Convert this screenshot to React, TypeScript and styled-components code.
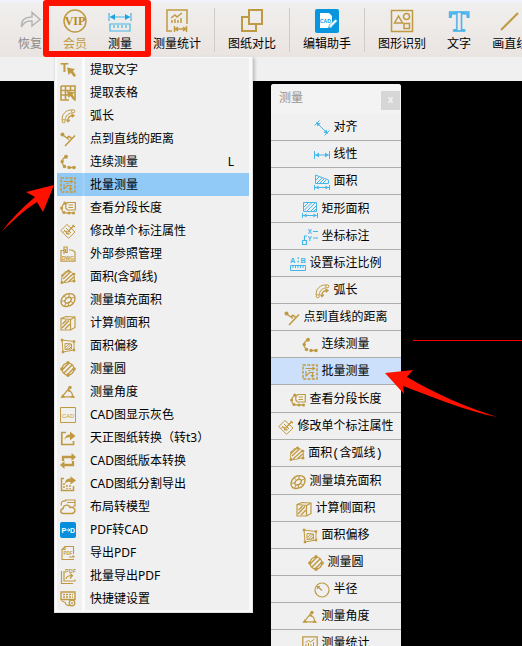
import React from "react";
import styled, { createGlobalStyle, css } from "styled-components";

const GOLD = "#c09a42";
const BLUE = "#45b6ea";
const RED = "#ff1100";

const GlobalStyle = createGlobalStyle`
  *, *::before, *::after { box-sizing: border-box; }
  html, body { margin: 0; background: #000; overflow: hidden; }
  body, button { font-family: "Liberation Mono", "Noto Sans CJK SC", monospace; font-size: 12px; }
`;

const Workspace = styled.main`
  position: relative;
  min-height: 100vh;
  display: flex;
  flex-direction: column;
  overflow: hidden;
`;

const Toolbar = styled.header`
  display: flex;
  align-items: flex-start;
  gap: 21px;
  height: 57px;
  padding: 6px 0 0 18px;
  border-top: 3px solid #f0f1f9;
  background: linear-gradient(#f0efed, #eae4e1);
`;

const ToolButton = styled.button<{ $tone?: string }>`
  flex: none;
  display: flex;
  flex-direction: column;
  align-items: center;
  gap: 3px;
  padding: 0;
  border: 0;
  background: none;
  color: ${(p) => p.$tone || "#000"};
  line-height: 18px;
  white-space: nowrap;

  svg { width: 24px; height: 24px; }
`;

const ToolSeparator = styled.span`
  flex: none;
  width: 1px;
  height: 44px;
  margin: -1px -8px 0;
  background: #cfcbc9;
`;

const TabStrip = styled.div`
  height: 24px;
  background: #f0f0f0;
`;

const Canvas = styled.section`
  flex: 1;
  background: #000;
`;

const Drawing = styled.svg`
  position: absolute;
  left: 0;
  top: 0;
  width: 100%;
  height: 100%;
  pointer-events: none;
`;

const Menu = styled.ul`
  position: absolute;
  left: 54px;
  top: 56px;
  width: 199px;
  margin: 0;
  padding: 1px 3px 2px 2px;
  list-style: none;
  border: 1px solid #e2e2e2;
  background: linear-gradient(#f0f0f0, #f0f0f0) content-box, #fafafa;
  box-shadow: 2px 2px 3px rgba(0, 0, 0, 0.2);
`;

const MenuButton = styled.button<{ $active?: boolean }>`
  display: grid;
  grid-template-columns: 25px 3px 1fr auto;
  align-items: center;
  width: 100%;
  height: 23px;
  padding: 0 15px 0 0;
  border: 0;
  background: ${(p) => (p.$active ? "#91c9f7" : "transparent")};
  color: #000;
  font-family: "Noto Sans", "Noto Sans CJK SC", sans-serif;
  line-height: 22px;
  text-align: left;
  white-space: nowrap;

  svg { width: 16px; height: 16px; margin-left: 3px; }
`;

const Groove = styled.span<{ $active?: boolean }>`
  height: 23px;
  background: ${(p) => (p.$active ? "#9dcff8" : "#fbfbfb")};
`;

const MenuLabel = styled.span`
  padding-left: 5px;
`;

const Palette = styled.aside`
  position: absolute;
  left: 271px;
  top: 84px;
  width: 130px;
  border-radius: 3px 3px 0 0;
  background: #f0f0f0;
`;

const PaletteHeader = styled.header`
  display: flex;
  align-items: flex-start;
  justify-content: space-between;
  height: 30px;
  padding: 7px 1px 0 8px;
  border-radius: 3px 3px 0 0;
  background: #f3f3f3;
`;

const PaletteTitle = styled.h2`
  margin: 0;
  color: #929292;
  font-size: 12px;
  font-weight: 400;
  line-height: 16px;
`;

const CloseButton = styled.button`
  width: 19px;
  height: 19px;
  padding: 0;
  border: 0;
  background: #d6d6d6;
  color: #f5f5f5;
  font-size: 10px;
  font-weight: 700;
  line-height: 19px;
`;

const PaletteList = styled.ul`
  margin: 0;
  padding: 0;
  list-style: none;
`;

const PaletteRow = styled.li`
  height: 27px;
  border-bottom: 1px solid #adadad;

  &:nth-child(4), &:nth-child(11), &:nth-child(14) { height: 28px; }
`;

const PaletteButton = styled.button<{ $active?: boolean }>`
  display: flex;
  align-items: center;
  justify-content: center;
  gap: 3px;
  width: 100%;
  height: 100%;
  padding: 2px 0 0;
  border: 0;
  color: #000;
  line-height: 20px;
  white-space: nowrap;
  ${(p) =>
    p.$active
      ? css`background: #cce0fb;`
      : css`background: transparent;`}

  svg { flex: none; width: 16px; height: 16px; }
`;

const Highlight = styled.div`
  position: absolute;
  left: 43px;
  top: 0;
  width: 108px;
  height: 57px;
  border: 6px solid ${RED};
  border-radius: 3px;
  pointer-events: none;
`;

function Mark({ x, y, size, color = GOLD, children }: { x: number; y: number; size: number; color?: string; children: string }) {
  return (
    <text x={x} y={y} fontSize={size} fontWeight="700" fill={color} stroke="none">
      {children}
    </text>
  );
}

const widthArrow = (
  <>
    <path d="M.5 11v5M15.500 11v5M1 13.500h14" />
    <path d="M1.500 13.500l3-2v4zM14.500 13.500l-3-2v4z" fill={BLUE} stroke="none" />
  </>
);

const glyphs: Record<string, React.ReactNode> = {
  pickText: (
    <>
      <Mark x={0.5} y={10} size={13}>T</Mark>
      <path d="M7 5.500l8 1.500-2 2 3 4.500-2 1.500-3.200-4.300L8.500 13z" fill={GOLD} stroke="none" />
    </>
  ),
  pickTable: (
    <>
      <path d="M1 1h14v7M1 1v14h8M1 5.500h14M1 10h7M5.500 1v14M10.500 1v5M15 8v7h-1" strokeWidth="1.600" />
      <path d="M7 6l7.500 1.500-2 2 2.500 4-1.800 1.500L10.500 11 8.500 13z" fill={GOLD} stroke="none" />
    </>
  ),
  arc: (
    <>
      <path d="M2.200 12C1.500 6.500 6 1.500 12 2M5.200 12C5.500 8 8 5.200 12 5" />
      <circle cx="3.700" cy="13.200" r="1.600" />
      <circle cx="13.200" cy="3.300" r="1.600" />
      <path d="M8 13c-.5-3.500 1.500-5.500 5-5.500M6.500 11.500L8 13.800l1.800-2M11.500 6l2.500 1.500-2.200 1.800" strokeWidth="1.300" />
    </>
  ),
  pointLine: (
    <>
      <path d="M2 3.500l7 5M5 15L15 4.500M7 6.800l2-1.500 3 2.200" strokeWidth="1.500" />
      <circle cx="2.500" cy="3.500" r="2" fill={GOLD} stroke="none" />
    </>
  ),
  chain: (
    <>
      <path d="M5.500 3C1 5.500 1 9.500 4.500 12.500M8 13.500h6" strokeWidth="1.400" />
      <g fill={GOLD} stroke="none">
        <circle cx="6" cy="2.800" r="2" />
        <circle cx="2.200" cy="7.500" r="1.700" />
        <circle cx="4.500" cy="12.500" r="1.800" />
        <circle cx="9" cy="13.500" r="1.700" />
        <circle cx="14" cy="13.500" r="1.800" />
      </g>
    </>
  ),
  batch: (
    <>
      <path d="M1 1h14v14H1z" strokeDasharray="3 1.300" strokeWidth="1.500" />
      <path d="M3.500 4.500h8.500M10.500 3L12.500 4.500 10.500 6M4 7v5.500M4 12l3.500-3.500h4.500M10.500 8.500v4M9 11l1.500 2 1.500-2M6.500 6.500h2" strokeWidth="1.100" />
    </>
  ),
  segments: (
    <>
      <path d="M4.500 3.500C1 6 1 9 3 12M5 12.800h8M7.500 2.500h7.800v7.500H7.500L5.800 8V4.500zM8.500 5H13M8.500 7.500H13" strokeWidth="1.200" />
      <g fill={GOLD} stroke="none">
        <circle cx="4.800" cy="3" r="1.600" />
        <circle cx="1.600" cy="8" r="1.500" />
        <circle cx="4" cy="12.500" r="1.600" />
        <circle cx="9" cy="13" r="1.600" />
        <circle cx="13.500" cy="13" r="1.600" />
      </g>
    </>
  ),
  modify: (
    <>
      <path d="M.8 7.500l6.200-6L15 9l-6.500 6.300zM4 7l4.500 4.500M6 5l5 5M3 9.500l2-2" />
      <path d="M7.500 9L14 2.500M6 8l.8 2.500H9.500M12.500 2l2.500 2" strokeWidth="1.400" />
    </>
  ),
  dwg: (
    <>
      <path d="M3.500 4.500H1v10.700h14V6l-3-2H9M4 8V1h3.200v5.500H5.500V3" strokeWidth="1.200" />
      <Mark x={2} y={13.500} size={5}>DWG</Mark>
    </>
  ),
  areaArc: (
    <>
      <path d="M2 13C.5 8 3 2.200 8 2.200c5 0 7.500 4.800 6 9.800-4-.5-8 3-12 1z" />
      <path d="M3 10l7.500-7M4 13l9.500-8.500M8.500 12.800l5.500-5M3.500 6L7 2.800" strokeWidth="1.300" />
      <g fill={GOLD} stroke="none">
        <circle cx="2" cy="13.500" r="1.500" />
        <circle cx="14" cy="12" r="1.500" />
        <circle cx="8.500" cy="2" r="1.500" />
        <circle cx="2.500" cy="6.500" r="1.300" />
        <circle cx="14" cy="5" r="1.300" />
      </g>
    </>
  ),
  fillArea: (
    <>
      <path d="M1.500 12C0 8 3 3 7 2c4-1 8 0 8 4 0 5-3 7.500-7.500 8.300-3 .5-5-.3-6-2.300z" strokeWidth="1.400" />
      <path d="M4.800 9c.8-3.500 5-4.500 6.200-3s-.5 4.800-4 5c-1.300 0-2.400-.7-2.200-2z" strokeWidth="1.400" />
      <path d="M4 4l2.500 2M9.500 1.800l-1 3.500M14.500 5l-3.500 1.500M13 11l-3-2M9 14l-1-3M4.500 14l1.500-3M1.500 9.500l3.500-1" />
    </>
  ),
  sideArea: (
    <>
      <path d="M1 3.500l5-2 9 .5v10.500L10.500 15H1zM1 3.500l9.500 1V15M10.500 4.500L15 2" strokeWidth="1.200" />
      <path d="M2 13l7-7.500M2.500 9l4-4M5 14l5-5" strokeWidth="1.400" />
    </>
  ),
  offset: (
    <>
      <path d="M2 2l12 1.500v8.500L3 14zM5 5.500l6.500.5v5l-6.500.5zM5.500 9.500l4-4M6.500 11l5-5M9 11l2.500-2.500" />
      <g fill={GOLD} stroke="none">
        <path d="M.8.8h2.400v2.400H.8zM12.800 2.300h2.400v2.400h-2.400zM12.800 10.800h2.400v2.400h-2.400zM1.800 12.800h2.400v2.400H1.800z" />
      </g>
    </>
  ),
  circle: (
    <>
      <circle cx="8" cy="8" r="6" strokeWidth="1.200" />
      <path d="M2.500 8.500l6-6M4 12l8-8M7.500 13.500l6-6" strokeWidth="1.500" />
      <g fill={GOLD} stroke="none">
        <circle cx="8" cy="1.800" r="1.700" />
        <circle cx="1.800" cy="8" r="1.700" />
        <circle cx="14.200" cy="8" r="1.700" />
        <circle cx="8" cy="14.200" r="1.700" />
      </g>
    </>
  ),
  angle: (
    <>
      <path d="M2 12.800h12M2 12.800L10 3M8.500 6c2.500 1.300 4 3.500 4 6" strokeWidth="1.200" />
      <g fill={GOLD} stroke="none">
        <circle cx="10" cy="3.500" r="1.700" />
        <path d="M.3 13.700L3 10l2 3.700zM10.500 13.700l2-3.200 2.800 3.200zM7.300 7.300L9 5l2 3.200z" />
      </g>
    </>
  ),
  grey: (
    <>
      <path d="M.5.5h15v15H.5z" />
      <text x="8" y="10.500" fontSize="6" textAnchor="middle" fill={GOLD} stroke="none">CAD</text>
    </>
  ),
  convert: (
    <>
      <path d="M6 2.500H1.800v12h11.700V11" strokeWidth="1.700" />
      <path d="M4.500 10C5 6 7 4.500 10 4.500V1.500L15.500 6 10 10.500V7.500C7 7 5.500 8 4.500 10z" fill={GOLD} stroke="none" />
    </>
  ),
  version: (
    <>
      <path d="M3 8V4h9.500M13 8v4H3.500" strokeWidth="2.300" />
      <path d="M11.500 0L16 4l-4.500 4zM4.500 8L0 12l4.500 4z" fill={GOLD} stroke="none" />
    </>
  ),
  split: (
    <>
      <path d="M4 2.500H1.500v12h12V10" strokeWidth="1.500" />
      <path d="M4 7v6M7 9v4M10 9v4" strokeDasharray="2 1" strokeWidth="1.500" />
      <path d="M5 8c0-4 2-5.500 5.500-5.500V.3L16 4.500l-5.500 4V6C8 5.500 6 6 5 8z" fill={GOLD} stroke="none" />
    </>
  ),
  layout: (
    <>
      <path d="M1.500 6.500c-1-3 1-5 4-4.500M5.500 2.500V1H15v6h-2M7 3.500h8" strokeWidth="1.200" />
      <path d="M3.500 14.500c-3.500 0-3.500-4.500-.5-4.800.5-4.500 6-4.500 7-1.200 3.500-.8 5.500 1.500 4.800 3.700-.5 1.800-1.800 2.300-3.300 2.300z" strokeWidth="1.400" />
    </>
  ),
  pdfCad: (
    <>
      <rect width="16" height="16" rx="2" fill="#078fdc" stroke="none" />
      <Mark x={1.5} y={10.800} size={7} color="#fff">P</Mark>
      <path d="M6.500 8h3M8.500 6.500L10 8 8.500 9.500" stroke="#fff" />
      <Mark x={10} y={10.800} size={7} color="#fff">D</Mark>
    </>
  ),
  pdfOut: (
    <>
      <path d="M13.500 9V1.500H5L2 4.500v10h7M2 4.500h3v-3M9 12h5.500M9 14.500h5M12.500 10.500l2 1.500" strokeWidth="1.100" />
      <Mark x={3.5} y={9.500} size={4.500}>PDF</Mark>
    </>
  ),
  pdfBatch: (
    <>
      <path d="M1.500 3v12.500H13M4 3v10h11v-1.500M6 11c.5-3 2.500-3.500 6-3.500M10 5.500l2.500 2-2.500 3" strokeWidth="1.200" />
      <Mark x={5} y={4.500} size={5.500}>PDF</Mark>
    </>
  ),
  keyboard: (
    <>
      <path d="M1 1h14v7.500H1z" strokeWidth="1.400" />
      <path d="M3 3.500h10M3 6h10" strokeWidth="1.300" strokeDasharray="2 1" />
      <path d="M1.500 9.500c1 1.500 4 1 4 2.500s2 3 5 2.500" strokeWidth="1.200" />
      <circle cx="12" cy="12" r="2.800" strokeWidth="1.300" />
      <circle cx="12" cy="12" r=".6" />
    </>
  ),
  radius: (
    <>
      <circle cx="8" cy="8" r="7" strokeWidth="1.200" />
      <path d="M3.500 4.500L8 8.500M3.500 7V4.500H6" strokeWidth="1.200" />
    </>
  ),
  stats: (
    <>
      <path d="M4 15.500H.8V.8h14.400V10M15 10v1" strokeWidth="1.300" />
      <path d="M4 11V8M6.500 11V7M9 11V8M11.500 11V6M3.500 6.500l3-2 2 1.500 4-3M6 12v4M15 12v4M6 14h9M8 12.500L6.500 14 8 15.500M13 12.500l1.500 1.500-1.500 1.500" />
    </>
  ),
};

const blueGlyphs: Record<string, React.ReactNode> = {
  align: (
    <>
      <path d="M.5 5.500l5-5M10.500 15.500l5-5M3 3l10 10" />
      <path d="M2 2l4.500 1.500-3 3zM14 14l-4.500-1.500 3-3z" fill={BLUE} stroke="none" />
    </>
  ),
  linear: (
    <>
      <path d="M.5 4v8M15.500 4v8M1 8h14" />
      <path d="M1.500 8l3.500-2.500v5zM14.500 8L11 5.500v5z" fill={BLUE} stroke="none" />
    </>
  ),
  area: (
    <>
      <path d="M1.500 9.500V1L14.500 6v3.500zM2 6l3-3M3 9l5-5M6 9l4-4M9 9l3-3" />
      {widthArrow}
    </>
  ),
  rectArea: (
    <>
      <path d="M1.500.5h13v9h-13zM2 5l4-4M2 8.500L9.500 1M5 9l8-8M9 9l5-5M12 9l2-2" />
      {widthArrow}
    </>
  ),
  coord: (
    <>
      <path d="M.5 11.500h4v4h-4zM2.500 11V7H5M11 2.500h5M11 9h5" strokeWidth="1.200" />
      <Mark x={5.500} y={5} size={6.500}>X</Mark>
      <Mark x={5.500} y={11.500} size={6.500}>Y</Mark>
    </>
  ),
  ratio: (
    <>
      <path d="M.5 9.500h15v5H.5zM3 10v2M5.500 10v2M8 10v2M10.500 10v2M13 10v2" />
      <Mark x={0} y={6.500} size={7.500}>A</Mark>
      <Mark x={10.500} y={6.500} size={7.500}>B</Mark>
      <path d="M7.500 2h1.500M7.500 5.500h1.500" strokeWidth="1.500" />
    </>
  ),
};

const IconFrame = styled.svg<{ $blue: boolean }>`
  font-family: "Liberation Sans", sans-serif;
  stroke: ${(p) => (p.$blue ? BLUE : GOLD)};

  text { fill: ${(p) => (p.$blue ? BLUE : undefined)}; }
`;

function Icon({ name }: { name: string }) {
  const blue = name in blueGlyphs;
  return (
    <IconFrame $blue={blue} viewBox="0 0 16 16" fill="none" strokeWidth="1" aria-hidden="true">
      {blue ? blueGlyphs[name] : glyphs[name]}
    </IconFrame>
  );
}

function ToolIcon({ color = GOLD, children }: { color?: string; children: React.ReactNode }) {
  return (
    <svg viewBox="0 0 24 24" fill="none" stroke={color} strokeWidth="1.500" aria-hidden="true">
      {children}
    </svg>
  );
}

const menuItems: { icon: string; label: string; shortcut?: string; active?: boolean }[] = [
  { icon: "pickText", label: "提取文字" },
  { icon: "pickTable", label: "提取表格" },
  { icon: "arc", label: "弧长" },
  { icon: "pointLine", label: "点到直线的距离" },
  { icon: "chain", label: "连续测量", shortcut: "L" },
  { icon: "batch", label: "批量测量", active: true },
  { icon: "segments", label: "查看分段长度" },
  { icon: "modify", label: "修改单个标注属性" },
  { icon: "dwg", label: "外部参照管理" },
  { icon: "areaArc", label: "面积(含弧线)" },
  { icon: "fillArea", label: "测量填充面积" },
  { icon: "sideArea", label: "计算侧面积" },
  { icon: "offset", label: "面积偏移" },
  { icon: "circle", label: "测量圆" },
  { icon: "angle", label: "测量角度" },
  { icon: "grey", label: "CAD图显示灰色" },
  { icon: "convert", label: "天正图纸转换（转t3）" },
  { icon: "version", label: "CAD图纸版本转换" },
  { icon: "split", label: "CAD图纸分割导出" },
  { icon: "layout", label: "布局转模型" },
  { icon: "pdfCad", label: "PDF转CAD" },
  { icon: "pdfOut", label: "导出PDF" },
  { icon: "pdfBatch", label: "批量导出PDF" },
  { icon: "keyboard", label: "快捷键设置" },
];

const paletteItems: { icon: string; label: string; active?: boolean }[] = [
  { icon: "align", label: "对齐" },
  { icon: "linear", label: "线性" },
  { icon: "area", label: "面积" },
  { icon: "rectArea", label: "矩形面积" },
  { icon: "coord", label: "坐标标注" },
  { icon: "ratio", label: "设置标注比例" },
  { icon: "arc", label: "弧长" },
  { icon: "pointLine", label: "点到直线的距离" },
  { icon: "chain", label: "连续测量" },
  { icon: "batch", label: "批量测量", active: true },
  { icon: "segments", label: "查看分段长度" },
  { icon: "modify", label: "修改单个标注属性" },
  { icon: "areaArc", label: "面积(含弧线)" },
  { icon: "fillArea", label: "测量填充面积" },
  { icon: "sideArea", label: "计算侧面积" },
  { icon: "offset", label: "面积偏移" },
  { icon: "circle", label: "测量圆" },
  { icon: "radius", label: "半径" },
  { icon: "angle", label: "测量角度" },
  { icon: "stats", label: "测量统计" },
];

export default function App() {
  return (
    <Workspace>
      <GlobalStyle />
      <Toolbar>
        <ToolButton $tone="#8a8a8a">
          <ToolIcon color="#b5b5b5">
            <path d="M3.500 18C3 11 7 8 14 8V3.500l8 7-8 6.500v-5C9 11.500 5.500 13 3.500 18z" />
          </ToolIcon>
          恢复
        </ToolButton>
        <ToolButton $tone="#c09a45">
          <ToolIcon>
            <circle cx="12" cy="12" r="11" />
            <text x="12" y="16" fontSize="12" fontWeight="700" fontFamily="Liberation Serif, serif" textAnchor="middle" fill="#b98a20" stroke="none">VIP</text>
          </ToolIcon>
          会员
        </ToolButton>
        <ToolButton>
          <ToolIcon color={BLUE}>
            <path d="M1 4v8M23 4v8M2 8h20M2 15h20v7H2zM6 16v3M10 16v3M14 16v3M18 16v3" strokeWidth="1.200" />
            <path d="M2 8l5-3v6zM22 8l-5-3v6z" fill="#1e9fe0" stroke="none" />
          </ToolIcon>
          测量
        </ToolButton>
        <ToolButton>
          <ToolIcon>
            <path d="M7 22H2V1h20v14" />
            <path d="M7 14v-3M10 14v-4M13 14v-3M16 14V9M6 9l4-3 2 2 5-4" />
            <path d="M9.500 17v6M21.500 17v6M10 20h11M13 18l-2.500 2 2.500 2M18 18l2.500 2-2.500 2" />
          </ToolIcon>
          测量统计
        </ToolButton>
        <ToolSeparator />
        <ToolButton>
          <ToolIcon>
            <path d="M9 1h13v14H9zM9 8H2v14h14v-7" strokeWidth="2" />
          </ToolIcon>
          图纸对比
        </ToolButton>
        <ToolSeparator />
        <ToolButton>
          <ToolIcon>
            <rect width="24" height="24" rx="2" fill="#0897df" stroke="none" />
            <path d="M5 4h9l3 3v11l-1 1H5z" fill="#fff" stroke="none" />
            <text x="5" y="14" fontSize="5" fontWeight="700" fontFamily="Liberation Sans, sans-serif" fill="#0897df" stroke="none">CAD</text>
            <path d="M13.500 19l1-3 6-6 2 2-6 6z" fill="#fff" stroke="#0897df" strokeWidth=".7" />
          </ToolIcon>
          编辑助手
        </ToolButton>
        <ToolSeparator />
        <ToolButton>
          <ToolIcon>
            <path d="M1.500 1.500h21v21h-21zM4.500 14L8.500 7l4 7zM14 14.500h5.500v5H14z" />
            <circle cx="16.500" cy="7.500" r="3" />
          </ToolIcon>
          图形识别
        </ToolButton>
        <ToolButton>
          <ToolIcon color={BLUE}>
            <text x="12" y="22" fontSize="30" fontFamily="Liberation Serif, serif" fontWeight="700" textAnchor="middle" fill="#eeecea" strokeWidth="1.500">T</text>
          </ToolIcon>
          文字
        </ToolButton>
        <ToolButton>
          <ToolIcon>
            <path d="M3 21L20 4" strokeWidth="2" />
          </ToolIcon>
          画直线
        </ToolButton>
      </Toolbar>
      <TabStrip />
      <Canvas aria-label="图纸" />

      <Palette aria-label="测量">
        <PaletteHeader>
          <PaletteTitle>测量</PaletteTitle>
          <CloseButton aria-label="关闭">x</CloseButton>
        </PaletteHeader>
        <PaletteList>
          {paletteItems.map((item) => (
            <PaletteRow key={item.label}>
              <PaletteButton $active={item.active}>
                <Icon name={item.icon} />
                {item.label}
              </PaletteButton>
            </PaletteRow>
          ))}
        </PaletteList>
      </Palette>

      <Menu>
        {menuItems.map((item) => (
          <li key={item.label}>
            <MenuButton $active={item.active}>
              <Icon name={item.icon} />
              <Groove $active={item.active} />
              <MenuLabel>{item.label}</MenuLabel>
              {item.shortcut && <span>{item.shortcut}</span>}
            </MenuButton>
          </li>
        ))}
      </Menu>

      <Highlight />
      <Drawing aria-hidden="true">
        <path d="M413 340.500H2000" stroke="#fa0000" />
        <path d="M385 373L413 370L407 377C436 394 466 407 497 417C466 411 435 398 403 386L404 394z" fill={RED} />
        <path d="M54 185L43 212L37 202C24 210 13 221 2 231C11 219 22 208 35 197L26 192z" fill={RED} />
      </Drawing>
    </Workspace>
  );
}
